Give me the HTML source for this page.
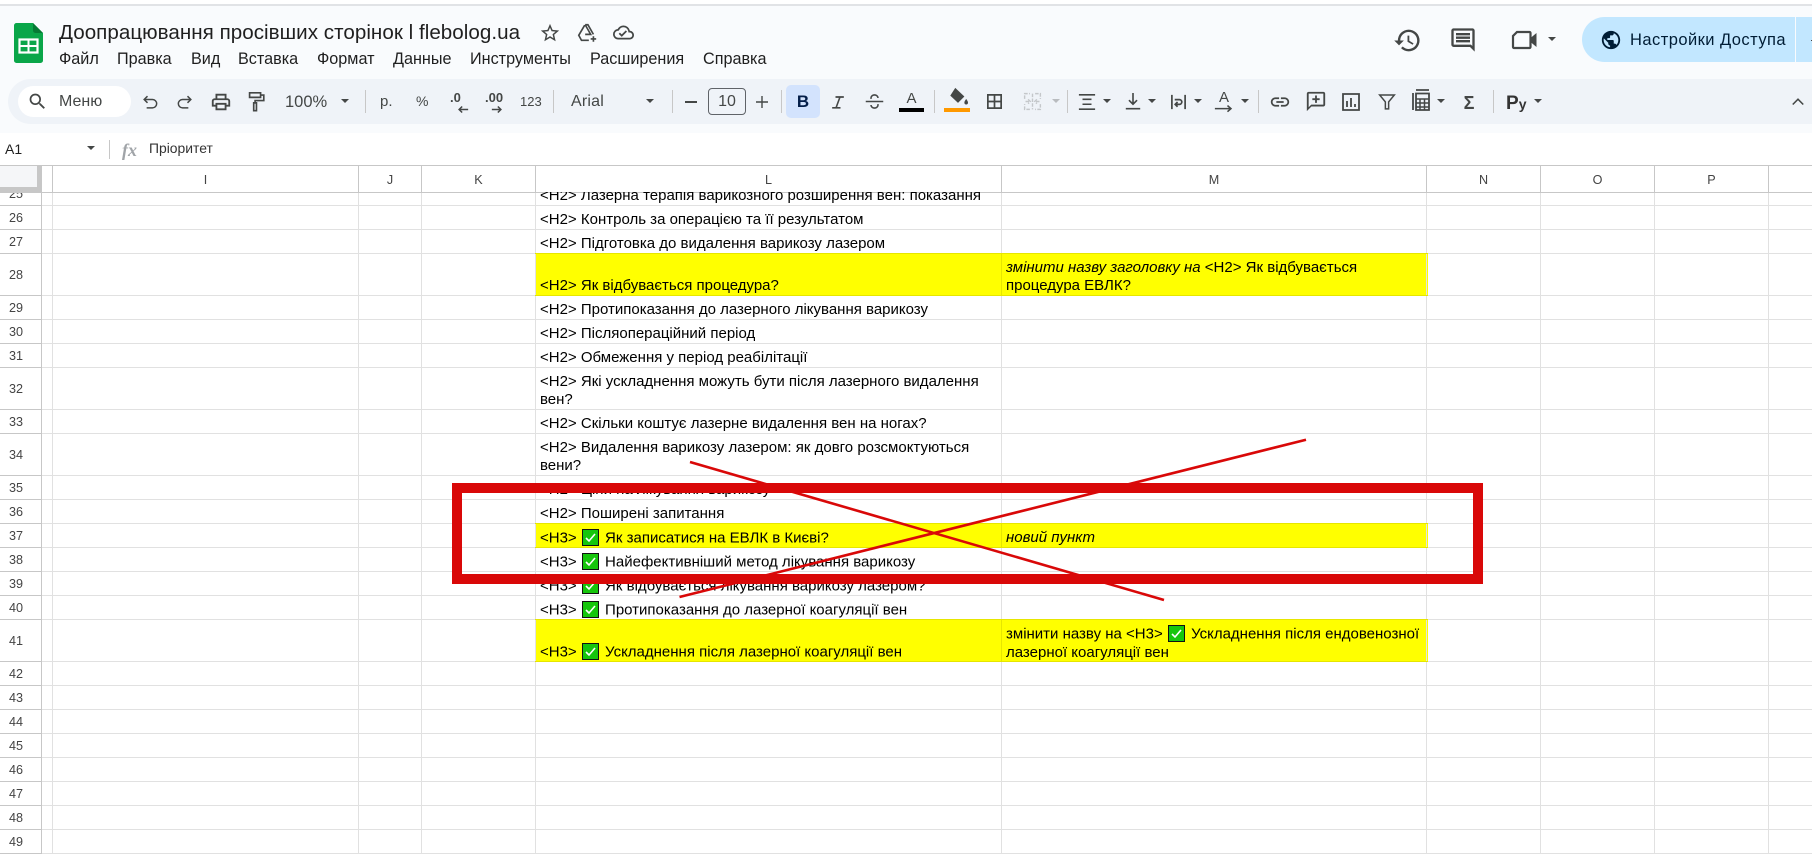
<!DOCTYPE html>
<html lang="uk"><head><meta charset="utf-8"><title>Sheet</title>
<style>
html,body{margin:0;padding:0;background:#fff}
#p{position:relative;width:1812px;height:854px;overflow:hidden;background:#fff;font-family:"Liberation Sans",Arial,sans-serif;color:#000}
#p>div,#p>svg{position:absolute}
.t{white-space:nowrap;color:#444746;font-size:15px;line-height:20px}
.m{white-space:nowrap;color:#1f1f1f;font-size:16.2px;line-height:20px;top:49px}
.i{fill:#444746}
.s{fill:none;stroke:#444746;stroke-width:1.8}
.a{width:0;height:0;border-left:4.5px solid transparent;border-right:4.5px solid transparent;border-top:4.5px solid #444746}
.sep{width:1px;height:23px;top:90px;background:#c7c7c7}
.c{white-space:nowrap;font-size:15px;line-height:18px;color:#000}
.r{left:0;width:32px;text-align:center;font-size:12.6px;color:#444;line-height:24px;height:23px}
.h{top:170px;height:20px;line-height:20px;text-align:center;font-size:12.6px;color:#444}
.e{display:inline-block;width:17px;height:17px;vertical-align:-3.5px;margin:0 2px 0 1px}
</style></head><body><div id="p">

<!-- header bg -->
<div style="left:0;top:0;width:1812px;height:4px;background:#fff"></div>
<div style="left:0;top:4px;width:1812px;height:2px;background:#e1e3e6"></div>
<div style="left:0;top:6px;width:1812px;height:127px;background:#f9fbfd"></div>
<div style="left:8px;top:79px;width:1830px;height:45px;border-radius:23px;background:#eff3f8"></div>

<!-- logo -->
<svg style="left:14px;top:23px" width="29" height="40" viewBox="0 0 29 40"><path d="M2.500 0H19l10 10v27.500a2.500 2.500 0 0 1-2.500 2.500h-24A2.500 2.500 0 0 1 0 37.500v-35A2.500 2.500 0 0 1 2.500 0z" fill="#0aa649"/><path d="M19 0l10 10h-7.500a2.500 2.500 0 0 1-2.500-2.500z" fill="#067a35"/><rect x="5.500" y="16.500" width="18" height="13" fill="none" stroke="#fff" stroke-width="2.200"/><path d="M5.500 23h18M14.500 16.500v13" stroke="#fff" stroke-width="2"/></svg>

<div class="t" style="left:59px;top:20px;font-size:20.6px;line-height:26px;color:#1f1f1f;letter-spacing:.03px">Доопрацювання просівших сторінок l flebolog.ua</div>

<svg style="left:539px;top:22px" width="22" height="22" viewBox="0 0 24 24"><path class="i" d="M22 9.240l-7.190-.620L12 2 9.190 8.630 2 9.240l5.460 4.730L5.820 21 12 17.270 18.180 21l-1.630-7.030L22 9.240zM12 15.400l-3.760 2.270 1-4.280-3.320-2.880 4.380-.380L12 6.100l1.710 4.040 4.380.380-3.320 2.880 1 4.280L12 15.400z"/></svg>
<svg style="left:576px;top:22px" width="22" height="22" viewBox="0 0 24 24"><path class="s" d="M10 3h3l6 10.500M9.500 3.500L3 14.500l3 5.500h8M10 3L16 13.500H10"/><path class="s" d="M19 15.500v6M16 18.500h6"/></svg>
<svg style="left:613px;top:22px" width="21" height="21" viewBox="0 0 24 24"><path class="i" d="M19.350 10.040A7.490 7.490 0 0 0 12 4C9.110 4 6.600 5.640 5.350 8.040A5.994 5.994 0 0 0 0 14c0 3.310 2.690 6 6 6h13c2.760 0 5-2.240 5-5 0-2.640-2.050-4.780-4.650-4.960zM19 18H6c-2.210 0-4-1.790-4-4 0-2.050 1.530-3.760 3.560-3.970l1.070-.110.500-.950A5.469 5.469 0 0 1 12 6c2.620 0 4.880 1.860 5.390 4.430l.300 1.500 1.530.110A2.980 2.980 0 0 1 22 15c0 1.650-1.350 3-3 3zm-9-3.820l-2.090-2.090L6.500 13.500 10 17l6.010-6.010-1.410-1.410z"/></svg>

<!-- menu -->
<div class="m" style="left:59px">Файл</div>
<div class="m" style="left:117px">Правка</div>
<div class="m" style="left:191px">Вид</div>
<div class="m" style="left:238px">Вставка</div>
<div class="m" style="left:317px">Формат</div>
<div class="m" style="left:393px">Данные</div>
<div class="m" style="left:470px">Инструменты</div>
<div class="m" style="left:590px">Расширения</div>
<div class="m" style="left:703px">Справка</div>

<!-- top right -->
<svg style="left:1393px;top:26px" width="29" height="29" viewBox="0 0 24 24"><path class="i" d="M13 3a9 9 0 0 0-9 9H1l3.890 3.890.070.140L9 12H6c0-3.870 3.130-7 7-7s7 3.130 7 7-3.130 7-7 7c-1.930 0-3.680-.790-4.940-2.060l-1.420 1.420A8.954 8.954 0 0 0 13 21a9 9 0 0 0 0-18zm-1 5v5l4.280 2.540.720-1.210-3.500-2.080V8H12z"/></svg>
<svg style="left:1449px;top:26px" width="28" height="28" viewBox="0 0 24 24"><path class="i" d="M20 4v13.170L18.830 16H4V4h16m0-2H4c-1.100 0-2 .9-2 2v12c0 1.100.9 2 2 2h14l4 4V4c0-1.100-.9-2-2-2zm-2 10H6v2h12v-2zm0-3H6v2h12V9zm0-3H6v2h12V6z"/></svg>
<svg style="left:1510px;top:26px" width="28" height="28" viewBox="0 0 28 28"><path d="M7 6h12.500a1 1 0 0 1 1 1v14a1 1 0 0 1-1 1H4a1 1 0 0 1-1-1V10z" fill="none" stroke="#444746" stroke-width="2.200"/><path d="M20.500 12l6-5v14l-6-5z" fill="#444746"/></svg>
<div class="a" style="left:1548px;top:37px"></div>
<div style="left:1582px;top:17px;width:260px;height:45px;border-radius:23px;background:#c2e7ff"></div>
<div style="left:1795px;top:17px;width:1px;height:45px;background:#f9fbfd"></div>
<svg style="left:1600px;top:29px" width="22" height="22" viewBox="0 0 24 24"><path fill="#001d35" d="M12 2C6.480 2 2 6.480 2 12s4.480 10 10 10 10-4.480 10-10S17.520 2 12 2zm-1 17.930c-3.950-.490-7-3.850-7-7.930 0-.620.080-1.210.210-1.790L9 15v1c0 1.100.9 2 2 2v1.930zm6.900-2.540c-.260-.810-1-1.390-1.900-1.390h-1v-3c0-.550-.450-1-1-1H8v-2h2c.550 0 1-.450 1-1V7h2c1.100 0 2-.9 2-2v-.410c2.930 1.190 5 4.060 5 7.410 0 2.080-.8 3.970-2.100 5.390z"/></svg>
<div class="t" style="left:1630px;top:30px;color:#001d35;font-size:16.500px;letter-spacing:.45px">Настройки Доступа</div>
<div style="left:1811px;top:40px;width:1px;height:1px;background:#444"></div>

<!-- toolbar -->
<div style="left:18px;top:86px;width:113px;height:31px;border-radius:16px;background:#fff"></div>
<svg style="left:27px;top:91px" width="21" height="21" viewBox="0 0 24 24"><path class="i" d="M15.500 14h-.790l-.280-.270A6.471 6.471 0 0 0 16 9.500 6.500 6.500 0 1 0 9.500 16c1.610 0 3.090-.590 4.230-1.570l.270.280v.790l5 4.990L20.490 19l-4.990-5zm-6 0C7.010 14 5 11.990 5 9.500S7.010 5 9.500 5 14 7.010 14 9.500 11.990 14 9.500 14z"/></svg>
<div class="t" style="left:59px;top:92px;font-size:16px">Меню</div>

<svg style="left:140px;top:92px" width="20" height="20" viewBox="0 0 24 24"><path class="s" d="M9 5L5 9l4 4M5 9h10a5 5 0 0 1 0 10H8"/></svg>
<svg style="left:175px;top:92px" width="20" height="20" viewBox="0 0 24 24"><path class="s" d="M15 5l4 4-4 4M19 9H9a5 5 0 0 0 0 10h7"/></svg>
<svg style="left:210px;top:91px" width="22" height="22" viewBox="0 0 24 24"><path class="i" d="M19 8h-1V3H6v5H5c-1.660 0-3 1.340-3 3v6h4v4h12v-4h4v-6c0-1.660-1.340-3-3-3zM8 5h8v3H8V5zm8 12v2H8v-4h8v2zm2-2v-2H6v2H4v-4c0-.550.450-1 1-1h14c.550 0 1 .450 1 1v4h-2z"/></svg>
<svg style="left:245px;top:90px" width="22" height="23" viewBox="0 0 24 24"><path class="s" d="M5 2.500h12v5H5zM17 5h3.500v6H11v2.500M9.500 13.500h3V22h-3z"/></svg>
<div class="t" style="left:285px;top:92px;font-size:16.500px">100%</div>
<div class="a" style="left:341px;top:99px"></div>
<div class="sep" style="left:365px"></div>
<div class="t" style="left:380px;top:92px;font-size:15px">р.</div>
<div class="t" style="left:416px;top:91px;font-size:14px">%</div>
<div class="t" style="left:450px;top:88px;font-size:13px;font-weight:700">.0</div>
<svg style="left:457px;top:105px" width="12" height="9" viewBox="0 0 14 10"><path class="s" d="M13 5H3M6 1.500L2.500 5 6 8.500"/></svg>
<div class="t" style="left:485px;top:88px;font-size:13px;font-weight:700">.00</div>
<svg style="left:491px;top:105px" width="12" height="9" viewBox="0 0 14 10"><path class="s" d="M1 5h10M8 1.500L11.500 5 8 8.500"/></svg>
<div class="t" style="left:520px;top:92px;font-size:13px">123</div>
<div class="sep" style="left:553px"></div>
<div class="t" style="left:571px;top:92px;font-size:16px;letter-spacing:.2px">Arial</div>
<div class="a" style="left:646px;top:99px"></div>
<div class="sep" style="left:672px"></div>
<div style="left:685px;top:101px;width:12px;height:1.500px;background:#444746"></div>
<div style="left:708px;top:88px;width:36px;height:25px;border:1px solid #5f6368;border-radius:4px"></div>
<div class="t" style="left:708px;top:92px;width:38px;text-align:center;font-size:16px">10</div>
<svg style="left:756px;top:96px" width="12" height="12" viewBox="0 0 13 13"><path d="M6.500 0v13M0 6.500h13" stroke="#444746" stroke-width="1.500"/></svg>
<div class="sep" style="left:781px"></div>
<div style="left:786px;top:85px;width:34px;height:33px;border-radius:5px;background:#d3e3fd"></div>
<div class="t" style="left:786px;top:92px;width:34px;text-align:center;font-size:17px;font-weight:700;color:#041e49">B</div>
<svg style="left:828px;top:92px" width="20" height="20" viewBox="0 0 24 24"><path d="M9 5h10v2h-4l-4 11h4v2H5v-2h4L13 7H9z" fill="#444746"/></svg>
<svg style="left:864px;top:91px" width="21" height="21" viewBox="0 0 24 24"><path class="s" d="M2 12h20M8 9V8a4 3.500 0 0 1 8 0M16 15v1a4 3.500 0 0 1-8 0"/></svg>
<div class="t" style="left:899px;top:89px;width:25px;text-align:center;font-size:15px">A</div>
<div style="left:899px;top:108px;width:25px;height:4px;background:#000"></div>
<div class="sep" style="left:934px"></div>
<svg style="left:947px;top:87px" width="22" height="20" viewBox="0 0 24 22"><path d="M9 1l10 9.500-7 7-8.500-8z" fill="#444746"/><path d="M21 13c1.300 2 2 3 2 4.200a2 2 0 0 1-4 0c0-1.200.7-2.200 2-4.200z" fill="#444746"/></svg>
<div style="left:944px;top:108px;width:26px;height:4px;background:#ff9900"></div>
<svg style="left:985px;top:92px" width="19" height="19" viewBox="0 0 20 20"><path class="s" d="M3 3h14v14H3zM10 3v14M3 10h14"/></svg>
<svg style="left:1022px;top:91px" width="21" height="21" viewBox="0 0 24 24"><path d="M3 9V3h6M15 3h6v6M21 15v6h-6M9 21H3v-6M12 3v18M4 12h5M7 9.500L9.500 12 7 14.500M20 12h-5M17 9.500L14.500 12 17 14.500" fill="none" stroke="#c4c7ca" stroke-width="1.600" stroke-dasharray="4 1.500"/></svg>
<div class="a" style="left:1052px;top:99px;border-top-color:#b9bcbf"></div>
<div class="sep" style="left:1067px"></div>
<svg style="left:1078px;top:93px" width="18" height="18" viewBox="0 0 20 20"><path class="s" d="M1 2h18M5 7h10M5 12.500h10M1 18h18"/></svg>
<div class="a" style="left:1103px;top:99px"></div>
<svg style="left:1124px;top:92px" width="18" height="19" viewBox="0 0 20 21"><path class="s" d="M10 1v12M5.500 9L10 13.500 14.500 9M2 18.500h16"/></svg>
<div class="a" style="left:1148px;top:99px"></div>
<svg style="left:1170px;top:92px" width="17" height="20" viewBox="0 0 18 21"><path class="s" d="M2 3v15M16 3v15M5 8h5a2.500 2.500 0 0 1 0 5H6M8 10.500L5.500 13 8 15.500"/></svg>
<div class="a" style="left:1194px;top:99px"></div>
<div class="t" style="left:1213px;top:88px;width:22px;text-align:center;font-size:15px">A</div>
<svg style="left:1214px;top:105px" width="20" height="9" viewBox="0 0 23 10"><path class="s" d="M1 4h18M15.500 .5L19.500 4 15.500 7.500"/></svg>
<div class="a" style="left:1241px;top:99px"></div>
<div class="sep" style="left:1258px"></div>
<svg style="left:1269px;top:91px" width="22" height="22" viewBox="0 0 24 24"><path class="i" d="M3.900 12c0-1.710 1.390-3.100 3.100-3.100h4V7H7c-2.760 0-5 2.240-5 5s2.240 5 5 5h4v-1.900H7c-1.710 0-3.100-1.390-3.100-3.100zM8 13h8v-2H8v2zm9-6h-4v1.900h4c1.710 0 3.100 1.390 3.100 3.100s-1.390 3.100-3.100 3.100h-4V17h4c2.760 0 5-2.240 5-5s-2.240-5-5-5z"/></svg>
<svg style="left:1305px;top:90px" width="22" height="22" viewBox="0 0 24 24"><path class="i" d="M20 4v12H6.800L4 18.800V4h16m0-2H4c-1.100 0-2 .9-2 2v19l5-5h13c1.100 0 2-.9 2-2V4c0-1.100-.9-2-2-2zM11 6h2v3h3v2h-3v3h-2v-3H8V9h3z"/></svg>
<svg style="left:1341px;top:92px" width="20" height="20" viewBox="0 0 20 20"><path class="s" d="M2 2h16v16H2z"/><path d="M6 9v6M10 6v9M14 12v3" stroke="#444746" stroke-width="1.800"/></svg>
<svg style="left:1378px;top:92px" width="18" height="19" viewBox="0 0 22 22"><path class="s" d="M2 3h18l-7 8.500V20h-4v-8.500z"/></svg>
<svg style="left:1411px;top:88px" width="20" height="24" viewBox="0 0 20 24"><path class="s" d="M5 2h13M2 5v17M5 5.500h13V22H5z"/><path d="M5 11h13M5 15h13M5 19h13M9 11v11M13.500 11v11" stroke="#444746" stroke-width="1.500"/></svg>
<div class="a" style="left:1437px;top:99px"></div>
<div class="t" style="left:1459px;top:93px;width:20px;text-align:center;font-size:18px;font-weight:700">Σ</div>
<div class="sep" style="left:1493px"></div>
<div class="t" style="left:1506px;top:94px;font-size:19px;font-weight:700;color:#333">P<span style="font-size:14px">y</span></div>
<div class="a" style="left:1534px;top:99px"></div>
<svg style="left:1789px;top:94px" width="18" height="14" viewBox="0 0 20 16"><path class="s" d="M4 12l6-6 6 6"/></svg>

<!-- formula bar -->
<div class="t" style="left:5px;top:139px;font-size:14px;color:#1f1f1f">A1</div>
<div class="a" style="left:87px;top:146px"></div>
<div style="left:109px;top:140px;width:1px;height:19px;background:#c7c7c7"></div>
<div style="left:122px;top:138px;font:italic 18px 'Liberation Serif',serif;line-height:24px;color:#a0a4a8;white-space:nowrap"><b>fx</b></div>
<div class="t" style="left:149px;top:138px;font-size:13.900px;color:#333">Пріоритет</div>

<!-- yellow cells -->
<div style="left:535px;top:254px;width:893px;height:42px;background:#ff0"></div>
<div style="left:535px;top:524px;width:893px;height:24px;background:#ff0"></div>
<div style="left:535px;top:620px;width:893px;height:42px;background:#ff0"></div>

<!-- grid -->
<svg style="left:0;top:0" width="1812" height="854" shape-rendering="crispEdges">
<g stroke="#e1e1e1" stroke-width="1">
<path d="M42 205.500H1812M42 229.500H1812M42 253.500H1812M42 295.500H1812M42 319.500H1812M42 343.500H1812M42 367.500H1812M42 409.500H1812M42 433.500H1812M42 475.500H1812M42 499.500H1812M42 523.500H1812M42 547.500H1812M42 571.500H1812M42 595.500H1812M42 619.500H1812M42 661.500H1812M42 685.500H1812M42 709.500H1812M42 733.500H1812M42 757.500H1812M42 781.500H1812M42 805.500H1812M42 829.500H1812M42 853.500H1812"/>
<path d="M52.500 192V854M358.500 192V854M421.500 192V854M535.500 192V854M1001.500 192V854M1426.500 192V854M1540.500 192V854M1654.500 192V854M1768.500 192V854"/>
</g>
<g stroke="#e6e600" stroke-width="1">
<path d="M535 253.500H1428M535 295.500H1428M1001.500 254V295M535 523.500H1428M535 547.500H1428M1001.500 524V547M535 619.500H1428M535 661.500H1428M1001.500 620V661"/>
</g>
<g stroke="#c7c7c7" stroke-width="1">
<path d="M0 205.500H41M0 229.500H41M0 253.500H41M0 295.500H41M0 319.500H41M0 343.500H41M0 367.500H41M0 409.500H41M0 433.500H41M0 475.500H41M0 499.500H41M0 523.500H41M0 547.500H41M0 571.500H41M0 595.500H41M0 619.500H41M0 661.500H41M0 685.500H41M0 709.500H41M0 733.500H41M0 757.500H41M0 781.500H41M0 805.500H41M0 829.500H41M0 853.500H41"/>
<path d="M41.500 192V854"/>
<path d="M0 165.500H1812M0 192.500H1812"/>
<path d="M52.500 165V192M358.500 165V192M421.500 165V192M535.500 165V192M1001.500 165V192M1426.500 165V192M1540.500 165V192M1654.500 165V192M1768.500 165V192"/>
</g>
<rect x="0" y="166" width="37" height="21" fill="#f5f6f8"/>
<rect x="37" y="166" width="5" height="26" fill="#c7c7c7"/>
<rect x="0" y="187" width="42" height="5" fill="#c7c7c7"/>
</svg>

<!-- col heads -->
<div class="h" style="left:53px;width:305px">I</div>
<div class="h" style="left:359px;width:62px">J</div>
<div class="h" style="left:422px;width:113px">K</div>
<div class="h" style="left:536px;width:465px">L</div>
<div class="h" style="left:1002px;width:424px">M</div>
<div class="h" style="left:1427px;width:113px">N</div>
<div class="h" style="left:1541px;width:113px">O</div>
<div class="h" style="left:1655px;width:113px">P</div>

<!-- row numbers -->
<div class="r" style="top:182px;clip-path:inset(11px 0 0 0)">25</div>
<div class="r" style="top:206px">26</div>
<div class="r" style="top:230px">27</div>
<div class="r" style="top:263px">28</div>
<div class="r" style="top:296px">29</div>
<div class="r" style="top:320px">30</div>
<div class="r" style="top:344px">31</div>
<div class="r" style="top:377px">32</div>
<div class="r" style="top:410px">33</div>
<div class="r" style="top:443px">34</div>
<div class="r" style="top:476px">35</div>
<div class="r" style="top:500px">36</div>
<div class="r" style="top:524px">37</div>
<div class="r" style="top:548px">38</div>
<div class="r" style="top:572px">39</div>
<div class="r" style="top:596px">40</div>
<div class="r" style="top:629px">41</div>
<div class="r" style="top:662px">42</div>
<div class="r" style="top:686px">43</div>
<div class="r" style="top:710px">44</div>
<div class="r" style="top:734px">45</div>
<div class="r" style="top:758px">46</div>
<div class="r" style="top:782px">47</div>
<div class="r" style="top:806px">48</div>
<div class="r" style="top:830px">49</div>

<!-- L text -->
<div class="c" style="left:540px;top:187px;clip-path:inset(5px 0 0 0)">&lt;H2&gt; Лазерна терапія варикозного розширення вен: показання</div>
<div class="c" style="left:540px;top:211px">&lt;H2&gt; Контроль за операцією та її результатом</div>
<div class="c" style="left:540px;top:235px">&lt;H2&gt; Підготовка до видалення варикозу лазером</div>
<div class="c" style="left:540px;top:277px">&lt;H2&gt; Як відбувається процедура?</div>
<div class="c" style="left:540px;top:301px">&lt;H2&gt; Протипоказання до лазерного лікування варикозу</div>
<div class="c" style="left:540px;top:325px">&lt;H2&gt; Післяопераційний період</div>
<div class="c" style="left:540px;top:349px">&lt;H2&gt; Обмеження у період реабілітації</div>
<div class="c" style="left:540px;top:373px">&lt;H2&gt; Які ускладнення можуть бути після лазерного видалення<br>вен?</div>
<div class="c" style="left:540px;top:415px">&lt;H2&gt; Скільки коштує лазерне видалення вен на ногах?</div>
<div class="c" style="left:540px;top:439px">&lt;H2&gt; Видалення варикозу лазером: як довго розсмоктуються<br>вени?</div>
<div class="c" style="left:540px;top:481px">&lt;H2&gt; Ціни на лікування варикозу</div>
<div class="c" style="left:540px;top:505px">&lt;H2&gt; Поширені запитання</div>
<div class="c" style="left:540px;top:529px">&lt;H3&gt; <svg class="e" viewBox="0 0 17 17"><rect x=".5" y=".5" width="16" height="16" fill="#16c60c" stroke="#111"/><path d="M4 9l3 3 6-7" fill="none" stroke="#fff" stroke-width="1.600"/></svg> Як записатися на ЕВЛК в Києві?</div>
<div class="c" style="left:540px;top:553px">&lt;H3&gt; <svg class="e" viewBox="0 0 17 17"><rect x=".5" y=".5" width="16" height="16" fill="#16c60c" stroke="#111"/><path d="M4 9l3 3 6-7" fill="none" stroke="#fff" stroke-width="1.600"/></svg> Найефективніший метод лікування варикозу</div>
<div class="c" style="left:540px;top:577px">&lt;H3&gt; <svg class="e" viewBox="0 0 17 17"><rect x=".5" y=".5" width="16" height="16" fill="#16c60c" stroke="#111"/><path d="M4 9l3 3 6-7" fill="none" stroke="#fff" stroke-width="1.600"/></svg> Як відбувається лікування варикозу лазером?</div>
<div class="c" style="left:540px;top:601px">&lt;H3&gt; <svg class="e" viewBox="0 0 17 17"><rect x=".5" y=".5" width="16" height="16" fill="#16c60c" stroke="#111"/><path d="M4 9l3 3 6-7" fill="none" stroke="#fff" stroke-width="1.600"/></svg> Протипоказання до лазерної коагуляції вен</div>
<div class="c" style="left:540px;top:643px">&lt;H3&gt; <svg class="e" viewBox="0 0 17 17"><rect x=".5" y=".5" width="16" height="16" fill="#16c60c" stroke="#111"/><path d="M4 9l3 3 6-7" fill="none" stroke="#fff" stroke-width="1.600"/></svg> Ускладнення після лазерної коагуляції вен</div>

<!-- M text -->
<div class="c" style="left:1006px;top:259px"><i>змінити назву заголовку на </i>&lt;H2&gt; Як відбувається<br>процедура ЕВЛК?</div>
<div class="c" style="left:1006px;top:529px"><i>новий пункт</i></div>
<div class="c" style="left:1006px;top:625px">змінити назву на &lt;H3&gt; <svg class="e" viewBox="0 0 17 17"><rect x=".5" y=".5" width="16" height="16" fill="#16c60c" stroke="#111"/><path d="M4 9l3 3 6-7" fill="none" stroke="#fff" stroke-width="1.600"/></svg> Ускладнення після ендовенозної<br>лазерної коагуляції вен</div>

<!-- red annotation -->
<svg style="left:0;top:0" width="1812" height="854">
<path d="M690 462L1164 600M679.500 597L1306 439.700" stroke="#d90808" stroke-width="2.600" fill="none"/>
<path fill-rule="evenodd" fill="#d90808" d="M452 483H1483V584H452zM462 493V574H1473V493z"/>
</svg>
</div></body></html>
